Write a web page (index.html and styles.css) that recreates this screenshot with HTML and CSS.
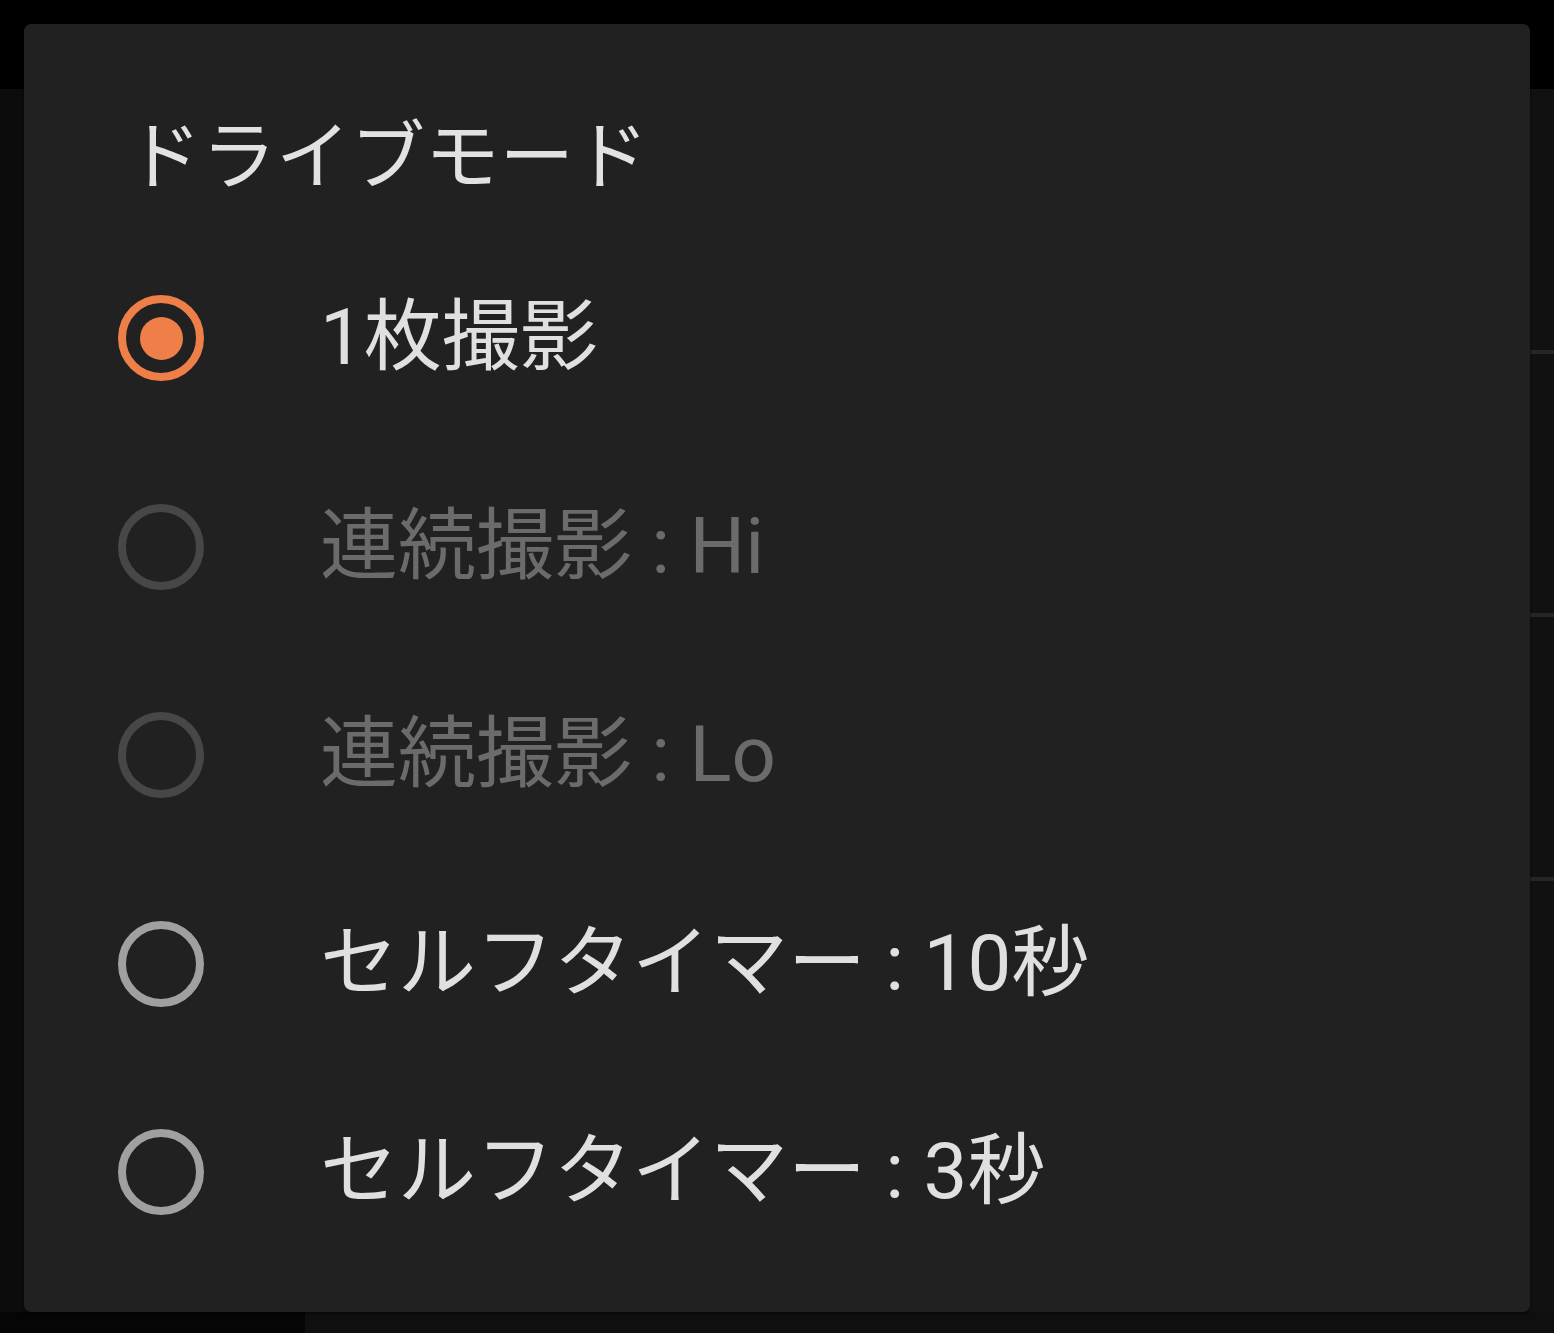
FILE: index.html
```html
<!DOCTYPE html>
<html lang="ja">
<head>
<meta charset="utf-8">
<link rel="stylesheet" href="styles.css">
</head>
<body>
<div class="screen">
  <div class="topbar"></div>
  <div class="content">
    <div class="side-left"></div>
    <div class="list">
      <div class="list-row r1"></div>
      <div class="list-row r2"></div>
      <div class="list-row r3"></div>
      <div class="list-row r4"></div>
    </div>
  </div>
  <div class="bottom">
    <div class="bottom-left"></div>
    <div class="bottom-right"></div>
  </div>

  <div class="dialog">
    <div class="title">ドライブモード</div>
    <div class="options">
      <div class="option">
        <span class="radio checked"><span class="dot"></span></span>
        <span class="label">1枚撮影</span>
      </div>
      <div class="option disabled">
        <span class="radio"></span>
        <span class="label">連続撮影 : Hi</span>
      </div>
      <div class="option disabled">
        <span class="radio"></span>
        <span class="label">連続撮影 : Lo</span>
      </div>
      <div class="option">
        <span class="radio"></span>
        <span class="label">セルフタイマー : 10秒</span>
      </div>
      <div class="option">
        <span class="radio"></span>
        <span class="label">セルフタイマー : 3秒</span>
      </div>
    </div>
  </div>
</div>
</body>
</html>
```
FILE: styles.css
```css
html, body {
  margin: 0;
  padding: 0;
  background: #000;
}
body {
  width: 1554px;
  height: 1333px;
  overflow: hidden;
  font-family: "Roboto", "Noto Sans CJK JP", sans-serif;
}
.screen {
  position: relative;
  width: 1554px;
  height: 1333px;
  display: flex;
  flex-direction: column;
}
.topbar {
  height: 89px;
  background: #000;
}
.content {
  flex: 1;
  display: flex;
  background: #0c0c0c;
}
.side-left {
  width: 305px;
}
.list {
  flex: 1;
  display: flex;
  flex-direction: column;
  background: #111;
}
.list-row {
  border-bottom: 4px solid #262626;
}
.r1 { height: 261px; }
.r2 { height: 259px; }
.r3 { height: 260px; }
.r4 { flex: 1; border-bottom: none; }
.bottom {
  height: 21px;
  display: flex;
}
.bottom-left {
  width: 305px;
  background: #050505;
}
.bottom-right {
  flex: 1;
  background: #0f0f0f;
}

.dialog {
  position: absolute;
  left: 24px;
  top: 24px;
  width: 1506px;
  height: 1288px;
  box-sizing: border-box;
  background: #212121;
  border-radius: 7px;
  box-shadow: 0 1px 3px rgba(0,0,0,0.6);
  padding: 89px 0 0 94px;
  display: flex;
  flex-direction: column;
}
.title {
  margin-left: 9px;
  font-family: "Noto Sans CJK JP", sans-serif;
  font-size: 74.5px;
  line-height: 75px;
  height: 75px;
  color: #e2e2e2;
  margin-bottom: 46px;
}
.options {
  display: flex;
  flex-direction: column;
}
.option {
  height: 208.5px;
  display: flex;
  align-items: center;
}
.radio {
  width: 86px;
  height: 86px;
  box-sizing: border-box;
  border-radius: 50%;
  border: 8px solid #a0a0a0;
  display: flex;
  align-items: center;
  justify-content: center;
  flex: none;
}
.radio.checked {
  border-color: #ef7f49;
}
.dot {
  width: 43px;
  height: 43px;
  border-radius: 50%;
  background: #ef7f49;
}
.label {
  margin-left: 116px;
  font-size: 78px;
  line-height: 1;
  color: #e0e0e0;
  white-space: nowrap;
}
.option.disabled .radio {
  border-color: #474747;
}
.option.disabled .label {
  color: #6b6b6b;
}
```
